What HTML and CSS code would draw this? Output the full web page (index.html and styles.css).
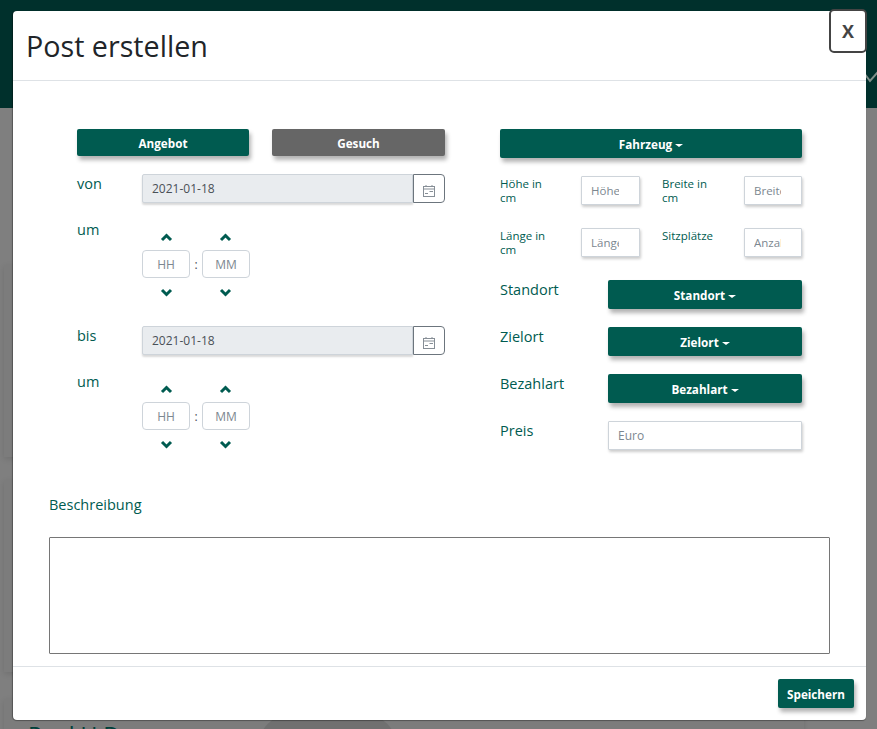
FILE: index.html
```html
<!DOCTYPE html>
<html lang="de">
<head>
<meta charset="UTF-8" />
<title>Post erstellen</title>
<link rel="stylesheet" href="styles.css">
</head>
<body>

<div class="page">
  <div class="topbar">
    <svg class="topbar-check" width="24" height="20" viewBox="0 0 24 20"><polyline points="3,9 9,17 22,2" fill="none" stroke="#7f8f8a" stroke-width="2"/></svg>
  </div>
  <div class="cards">
    <div class="card"></div>
    <div class="card"></div>
    <div class="card card-last">
      <div class="card-name">Paul U Do</div>
      <div class="card-pill"></div>
    </div>
  </div>
</div>

<div class="modal">
  <div class="modal-header">
    <h2>Post erstellen</h2>
  </div>
  <button class="close-btn">X</button>

  <div class="modal-body">
    <div class="columns">
      <div class="col-left">
        <div class="type-row">
          <button class="btn btn-type">Angebot</button>
          <button class="btn btn-type btn-gray">Gesuch</button>
        </div>

        <div class="date-row">
          <label class="lbl">von</label>
          <div class="date-group">
            <input class="date-input" type="text" value="2021-01-18" readonly />
            <button class="date-btn">
              <svg width="14" height="14" viewBox="0 0 14 14"><g fill="none" stroke="#868e96" stroke-width="1"><rect x="1.5" y="2.5" width="11" height="10"/><line x1="1.5" y1="5" x2="12.5" y2="5"/><line x1="4" y1="1" x2="4" y2="2.5"/><line x1="10" y1="1" x2="10" y2="2.5"/><line x1="3" y1="9.5" x2="6" y2="9.5"/><line x1="7.5" y1="7.5" x2="11" y2="7.5"/></g></svg>
            </button>
          </div>
        </div>

        <div class="time-row">
          <label class="lbl">um</label>
          <div class="time-picker">
            <div class="time-arrows">
              <svg class="chev" width="13" height="9" viewBox="0 0 13 9"><polyline points="2,7 6.5,2.5 11,7" fill="none" stroke="#005b50" stroke-width="3"/></svg>
              <svg class="chev" width="13" height="9" viewBox="0 0 13 9"><polyline points="2,7 6.5,2.5 11,7" fill="none" stroke="#005b50" stroke-width="3"/></svg>
            </div>
            <div class="time-inputs">
              <input class="time-input" type="text" placeholder="HH" />
              <span class="time-sep">:</span>
              <input class="time-input" type="text" placeholder="MM" />
            </div>
            <div class="time-arrows">
              <svg class="chev" width="13" height="9" viewBox="0 0 13 9"><polyline points="2,2 6.5,6.5 11,2" fill="none" stroke="#005b50" stroke-width="3"/></svg>
              <svg class="chev" width="13" height="9" viewBox="0 0 13 9"><polyline points="2,2 6.5,6.5 11,2" fill="none" stroke="#005b50" stroke-width="3"/></svg>
            </div>
          </div>
        </div>

        <div class="date-row date-row-bis">
          <label class="lbl">bis</label>
          <div class="date-group">
            <input class="date-input" type="text" value="2021-01-18" readonly />
            <button class="date-btn">
              <svg width="14" height="14" viewBox="0 0 14 14"><g fill="none" stroke="#868e96" stroke-width="1"><rect x="1.5" y="2.5" width="11" height="10"/><line x1="1.5" y1="5" x2="12.5" y2="5"/><line x1="4" y1="1" x2="4" y2="2.5"/><line x1="10" y1="1" x2="10" y2="2.5"/><line x1="3" y1="9.5" x2="6" y2="9.5"/><line x1="7.5" y1="7.5" x2="11" y2="7.5"/></g></svg>
            </button>
          </div>
        </div>

        <div class="time-row">
          <label class="lbl">um</label>
          <div class="time-picker">
            <div class="time-arrows">
              <svg class="chev" width="13" height="9" viewBox="0 0 13 9"><polyline points="2,7 6.5,2.5 11,7" fill="none" stroke="#005b50" stroke-width="3"/></svg>
              <svg class="chev" width="13" height="9" viewBox="0 0 13 9"><polyline points="2,7 6.5,2.5 11,7" fill="none" stroke="#005b50" stroke-width="3"/></svg>
            </div>
            <div class="time-inputs">
              <input class="time-input" type="text" placeholder="HH" />
              <span class="time-sep">:</span>
              <input class="time-input" type="text" placeholder="MM" />
            </div>
            <div class="time-arrows">
              <svg class="chev" width="13" height="9" viewBox="0 0 13 9"><polyline points="2,2 6.5,6.5 11,2" fill="none" stroke="#005b50" stroke-width="3"/></svg>
              <svg class="chev" width="13" height="9" viewBox="0 0 13 9"><polyline points="2,2 6.5,6.5 11,2" fill="none" stroke="#005b50" stroke-width="3"/></svg>
            </div>
          </div>
        </div>
      </div>

      <div class="col-right">
        <button class="btn btn-wide caret">Fahrzeug</button>

        <div class="size-grid">
          <label class="size-lbl">Höhe in cm</label>
          <input class="size-input" type="text" placeholder="Höhe" />
          <label class="size-lbl size-lbl-second">Breite in cm</label>
          <input class="size-input" type="text" placeholder="Breite" />
          <label class="size-lbl">Länge in cm</label>
          <input class="size-input" type="text" placeholder="Länge" />
          <label class="size-lbl size-lbl-second">Sitzplätze</label>
          <input class="size-input" type="text" placeholder="Anzahl" />
        </div>

        <div class="select-row">
          <label class="lbl">Standort</label>
          <button class="btn btn-select caret">Standort</button>
        </div>
        <div class="select-row">
          <label class="lbl">Zielort</label>
          <button class="btn btn-select caret">Zielort</button>
        </div>
        <div class="select-row">
          <label class="lbl">Bezahlart</label>
          <button class="btn btn-select caret">Bezahlart</button>
        </div>
        <div class="select-row">
          <label class="lbl">Preis</label>
          <input class="price-input" type="text" placeholder="Euro" />
        </div>
      </div>
    </div>

    <label class="lbl desc-lbl">Beschreibung</label>
    <textarea class="desc"></textarea>
  </div>

  <div class="modal-footer">
    <button class="btn btn-save">Speichern</button>
  </div>
</div>

</body>
</html>
```

FILE: styles.css
```css
* {
  box-sizing: border-box;
}
html, body {
  margin: 0;
  height: 100%;
  overflow: hidden;
}
body {
  font-family: "Open Sans", "Noto Sans", sans-serif;
  background: #7f7f7f;
}
.page {
  height: 729px;
  overflow: hidden;
}
.topbar {
  height: 108px;
  background: #00302c;
  position: relative;
}
.topbar-check {
  position: absolute;
  right: -8px;
  top: 64px;
}
.cards {
  padding: 157px 0 0 4px;
  display: flex;
  flex-direction: column;
  gap: 23px;
}
.card {
  height: 192px;
  width: 800px;
  background: #7c7c7c;
  box-shadow: 0 2px 6px rgba(0, 0, 0, 0.12);
}
.card-last {
  position: relative;
  margin-top: 4px;
}
.card-name {
  position: absolute;
  left: 24px;
  top: 20px;
  font-size: 23px;
  color: #00403a;
  line-height: 32px;
}
.card-pill {
  position: absolute;
  left: 255px;
  top: 16px;
  width: 137px;
  height: 60px;
  border-radius: 30px;
  background: #707070;
}

.modal {
  position: absolute;
  left: 13px;
  top: 11px;
  width: 853px;
  height: 709px;
  background: white;
  border-radius: 4px;
  box-shadow: -1px 0 1px rgba(0, 0, 0, 0.3), 0 1px 1px rgba(0, 0, 0, 0.3);
  display: flex;
  flex-direction: column;
}
.modal-header {
  height: 70px;
  padding: 14px 13px 0;
  border-bottom: 1px solid #dee2e6;
}
h2 {
  margin: 0;
  font-size: 28.7px;
  font-weight: 400;
  line-height: 42px;
  color: #212529;
}
.close-btn {
  position: absolute;
  left: 816px;
  top: -2px;
  width: 38px;
  height: 44px;
  background: white;
  border: 2px solid #444;
  border-radius: 5px;
  font-family: "Open Sans", sans-serif;
  font-size: 18px;
  font-weight: 700;
  color: #444;
  padding: 0;
}
.modal-body {
  flex: 1;
  padding: 48px 36px 0;
}
.columns {
  display: flex;
  padding: 0 0 0 28px;
  gap: 55px;
  height: 366px;
}
.col-left {
  width: 368px;
}
.col-right {
  width: 302px;
}

.btn {
  background: #005b50;
  color: white;
  border: none;
  border-radius: 2px;
  font-family: "Open Sans", sans-serif;
  font-size: 11.7px;
  font-weight: 700;
  padding: 0;
  box-shadow: 2px 4px 4px rgba(0, 0, 0, 0.3);
}
.caret::after {
  content: "";
  display: inline-block;
  margin-left: 3px;
  vertical-align: 2px;
  border-top: 3px solid white;
  border-left: 4px solid transparent;
  border-right: 4px solid transparent;
}
.type-row {
  display: flex;
  gap: 23px;
}
.btn-type {
  width: 172px;
  height: 27px;
}
.btn-gray {
  width: 173px;
  background: #666;
}
.btn-wide {
  width: 100%;
  height: 29px;
}

.lbl {
  font-size: 14.5px;
  line-height: 19px;
  color: #005b50;
  font-weight: 400;
}
.date-row {
  display: flex;
  margin-top: 18px;
}
.date-row .lbl {
  width: 65px;
}
.date-row-bis {
  margin-top: 29px;
}
.date-group {
  display: flex;
  flex: 1;
}
.date-input {
  flex: 1;
  min-width: 0;
  height: 29px;
  padding: 0 9px;
  background: #e9ecef;
  border: 1px solid #ced4da;
  border-radius: 2px 0 0 2px;
  font-family: inherit;
  font-size: 12px;
  color: #495057;
  box-shadow: 0 2px 2px rgba(0, 0, 0, 0.15);
}
.date-btn {
  width: 32px;
  height: 29px;
  background: white;
  border: 1px solid #6c757d;
  border-radius: 0 4px 4px 0;
  padding: 5px 0 0;
}
.date-btn svg {
  display: block;
  margin: 0 auto;
}
.time-row {
  display: flex;
  margin-top: 17px;
}
.time-row .lbl {
  width: 65px;
}
.time-picker {
  width: 108px;
  padding-top: 13px;
}
.time-arrows {
  display: flex;
  justify-content: space-between;
  padding: 0 18px;
  height: 9px;
}
.chev {
  display: block;
}
.time-inputs {
  display: flex;
  align-items: center;
  margin: 8px 0 10px;
}
.time-input {
  width: 48px;
  height: 28px;
  padding: 0;
  text-align: center;
  border: 1px solid #ced4da;
  border-radius: 4px;
  font-family: inherit;
  font-size: 12px;
}
.time-sep {
  width: 12px;
  text-align: center;
  font-size: 12px;
  color: #495057;
}
input::placeholder {
  color: #7c8790;
  opacity: 1;
}

.size-grid {
  display: grid;
  grid-template-columns: 81px 59px 104px 58px;
  grid-auto-rows: 29px;
  row-gap: 23px;
  margin-top: 18px;
}
.size-lbl {
  font-size: 11.5px;
  line-height: 14px;
  font-weight: 500;
  color: #005b50;
  width: 60px;
  padding-top: 1px;
}
.size-lbl-second {
  margin-left: 22px;
}
.size-input {
  width: 100%;
  min-width: 0;
  height: 29px;
  padding: 0 20px 0 9px;
  border: 1px solid #ced4da;
  border-radius: 1px;
  font-family: inherit;
  font-size: 11.5px;
  box-shadow: 1px 2px 3px rgba(0, 0, 0, 0.2);
}
.select-row {
  display: flex;
  justify-content: space-between;
  height: 29px;
  margin-top: 18px;
}
.size-grid + .select-row {
  margin-top: 23px;
}
.btn-select {
  width: 194px;
  height: 29px;
}
.price-input {
  width: 194px;
  height: 29px;
  padding: 0 9px;
  border: 1px solid #ced4da;
  border-radius: 1px;
  font-family: inherit;
  font-size: 12px;
  box-shadow: 1px 2px 3px rgba(0, 0, 0, 0.2);
}
.desc-lbl {
  display: block;
}
.desc {
  display: block;
  width: 781px;
  height: 117px;
  margin-top: 23px;
  border: 1px solid #767676;
  border-radius: 1px;
  resize: none;
}
.modal-footer {
  height: 54px;
  border-top: 1px solid #dee2e6;
  display: flex;
  justify-content: flex-end;
  padding: 12px 12px 0 0;
}
.btn-save {
  width: 76px;
  height: 29px;
}
```
